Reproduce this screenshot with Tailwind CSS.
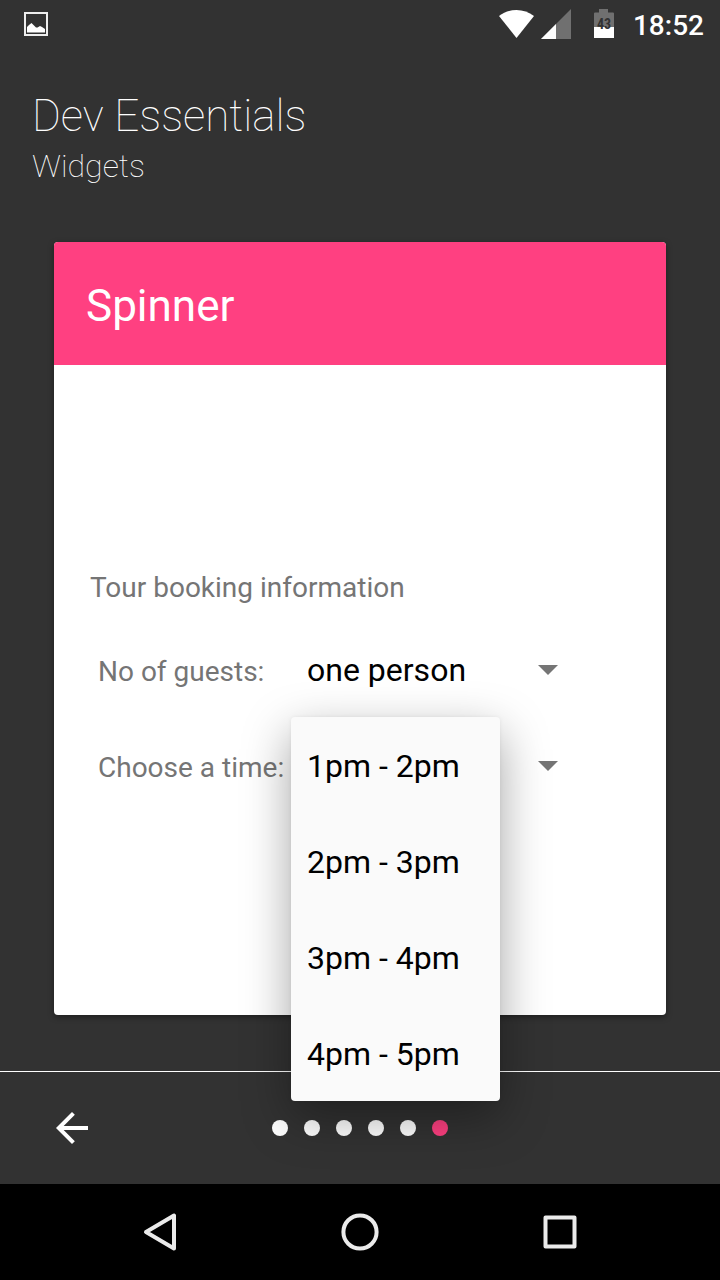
<!DOCTYPE html>
<html lang="en">
<head>
<meta charset="utf-8">
<meta name="viewport" content="width=device-width, initial-scale=1">
<title>Dev Essentials - Widgets</title>
<script src="https://cdn.jsdelivr.net/npm/@tailwindcss/browser@4"></script>
</head>
<body class="flex min-h-screen flex-col bg-[#323232] font-[Roboto,sans-serif] text-white">
  <!-- Status bar -->
  <div class="flex h-12 items-center justify-between pr-4 pl-6">
    <svg class="size-6" viewBox="0 0 24 24" fill="none" aria-label="Picture">
      <path d="M1 1H23V23H1Z" stroke="#eee" stroke-width="2"/>
      <path d="M3 20.500V15L5 13L7.500 11L10 13.500L12 15.500L13.500 15.500L16 14L18 15L21 17V20.500Z" fill="#fff"/>
    </svg>
    <div class="flex items-center">
      <svg class="h-7 w-[35px]" viewBox="0 0 35 28" aria-label="Wi-Fi"><path d="M0 6C10-2 25-2 35 6L17.500 28Z" fill="#fff"/></svg>
      <svg class="ml-[7px] size-[30px]" viewBox="0 0 30 30" aria-label="Signal"><path d="M30 0V30H0Z" fill="#707070"/><path d="M15 15V30H0Z" fill="#fff"/></svg>
      <svg class="ml-[23px] h-[30px] w-5" viewBox="0 0 20 30" aria-label="Battery">
        <path d="M0 4.500Q0 3.500 1 3.500H5V0H14V3.500H19Q20 3.500 20 4.500V18H0Z" fill="#707070"/>
        <path d="M0 18H20V29H0Z" fill="#fff"/>
        <text x="10" y="20" text-anchor="middle" font-family="'Roboto Condensed', Roboto, sans-serif" font-weight="700" font-size="14" fill="#323232">43</text>
      </svg>
      <span class="ml-[19px] pt-1 text-[28px] leading-8 font-medium">18:52</span>
    </div>
  </div>

  <header class="px-8 pt-[41px]">
    <h1 class="text-[44px] leading-[54px] font-thin">Dev Essentials</h1>
    <p class="text-[32px] leading-[46px] font-thin">Widgets</p>
  </header>

  <main class="mx-[54px] mt-[53px] mb-14 flex flex-1 flex-col rounded bg-white shadow-[0_2px_6px_rgba(0,0,0,0.4)]">
    <h2 class="rounded-t bg-[#ff4081] px-8 pt-[38px] pb-[33px] text-[44px] leading-[52px]">Spinner</h2>
    <form class="flex flex-1 flex-col justify-center px-9 text-[28px] text-[#757575]">
      <p class="pt-0.5 pb-3.5 leading-10">Tour booking information</p>
      <div class="flex h-24 items-baseline pl-2">
        <label for="guests" class="w-[193px] shrink-0">No of guests:</label>
        <div class="relative w-[281px]">
          <select id="guests" class="h-24 w-full appearance-none bg-transparent px-4 text-[32px] text-black outline-none">
            <option>one person</option>
            <option>two people</option>
          </select>
          <svg class="pointer-events-none absolute top-[43px] right-[14px] h-[10px] w-5" viewBox="0 0 20 10"><path d="M0 0H20L10 10Z" fill="#757575"/></svg>
        </div>
      </div>
      <div class="flex h-24 items-baseline pl-2">
        <label for="time" class="w-[193px] shrink-0 whitespace-nowrap">Choose a time:</label>
        <div class="relative w-[281px]">
          <select id="time" class="h-24 w-full appearance-none bg-transparent px-4 text-[32px] text-black outline-none">
            <option>1pm - 2pm</option>
            <option>2pm - 3pm</option>
            <option>3pm - 4pm</option>
            <option>4pm - 5pm</option>
          </select>
          <svg class="pointer-events-none absolute top-[43px] right-[14px] h-[10px] w-5" viewBox="0 0 20 10"><path d="M0 0H20L10 10Z" fill="#757575"/></svg>
          <!-- Open drop-down list -->
          <div role="listbox" aria-label="Choose a time" class="absolute -top-px left-0 z-10 flex w-[209px] flex-col rounded bg-[#fafafa] text-[32px] text-black shadow-[0_16px_48px_rgba(0,0,0,0.36),0_0_4px_rgba(0,0,0,0.06)]">
            <button type="button" role="option" aria-selected="true" class="h-24 px-4 pt-0.5 text-left">1pm - 2pm</button>
            <button type="button" role="option" aria-selected="false" class="h-24 px-4 pt-0.5 text-left">2pm - 3pm</button>
            <button type="button" role="option" aria-selected="false" class="h-24 px-4 pt-0.5 text-left">3pm - 4pm</button>
            <button type="button" role="option" aria-selected="false" class="h-24 px-4 pt-0.5 text-left">4pm - 5pm</button>
          </div>
        </div>
      </div>
    </form>
  </main>

  <!-- Pager -->
  <footer class="grid h-[113px] grid-cols-[1fr_auto_1fr] items-center border-t border-white px-12">
    <button type="button" aria-label="Previous" class="size-12">
      <svg class="size-12" viewBox="0 0 24 24" fill="#fff"><path d="M20 11H7.830l5.590-5.590L12 4l-8 8 8 8 1.410-1.410L7.830 13H20v-2z"/></svg>
    </button>
    <div class="flex gap-4">
      <span class="size-4 rounded-full bg-white"></span>
      <span class="size-4 rounded-full bg-white"></span>
      <span class="size-4 rounded-full bg-white"></span>
      <span class="size-4 rounded-full bg-white"></span>
      <span class="size-4 rounded-full bg-white"></span>
      <span class="size-4 rounded-full bg-[#ff4081]"></span>
    </div>
  </footer>

  <!-- System navigation -->
  <nav class="flex h-24 items-center justify-center gap-[152px] bg-black">
    <button type="button" aria-label="Back" class="size-12"><svg class="size-12" viewBox="0 0 48 48" fill="none" stroke="#ebebeb" stroke-width="4" stroke-linejoin="round"><path d="M38 7.500V40.500L10 24Z"/></svg></button>
    <button type="button" aria-label="Home" class="size-12"><svg class="size-12" viewBox="0 0 48 48" fill="none" stroke="#ebebeb" stroke-width="4"><circle cx="24" cy="24" r="16.600"/></svg></button>
    <button type="button" aria-label="Recent apps" class="size-12"><svg class="size-12" viewBox="0 0 48 48" fill="none" stroke="#ebebeb" stroke-width="4" stroke-linejoin="round"><path d="M9.500 9.500H38.500V38.500H9.500Z"/></svg></button>
  </nav>
</body>
</html>
